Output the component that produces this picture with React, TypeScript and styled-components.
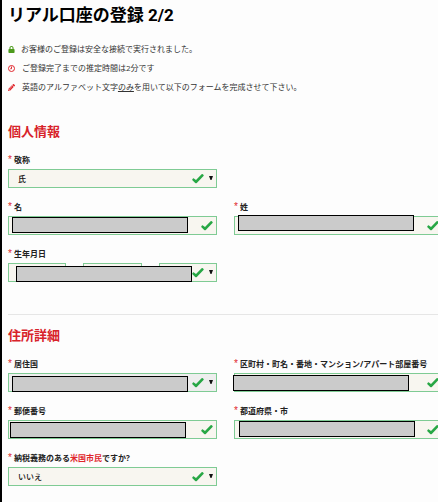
import React from "react";
import styled, { createGlobalStyle } from "styled-components";
import { FaLock, FaPencilAlt } from "react-icons/fa";

const GlobalStyle = createGlobalStyle`
  *, *::before, *::after { box-sizing: border-box; }
  html { overflow-x: hidden; }
  body {
    margin: 0;
    background: #fdfdfd;
    color: #222;
    font-family: "Open Sans", "Noto Sans CJK JP", sans-serif;
    font-size: 8px;
    line-height: 12px;
  }
`;

const Page = styled.main`
  min-height: 100vh;
  padding: 2px 0 12px 6px;
  border-left: 2px solid #000;
  overflow: hidden;
`;

const Title = styled.h1`
  margin: 0;
  font-family: Roboto, "Noto Sans CJK JP", sans-serif;
  font-size: 17px;
  font-weight: 700;
  line-height: 26px;
  color: #000;
`;

const Notes = styled.ul`
  list-style: none;
  margin: 15px 0 0;
  padding: 0;
  display: grid;
  row-gap: 7px;
`;

const Note = styled.li<{ $color: string; $gap: number }>`
  display: flex;
  align-items: center;
  gap: ${(p) => p.$gap}px;
  color: #333;
  white-space: nowrap;
  svg {
    flex: none;
    width: 7px;
    height: 7px;
    color: ${(p) => p.$color};
  }
`;

const Section = styled.section`
  margin-top: 29px;
  & + & {
    margin-top: 32px;
    padding-top: 11px;
    border-top: 1px solid #e6e6e6;
  }
`;

const Heading = styled.h2`
  margin: 0 0 14px;
  font-size: 13px;
  font-weight: 700;
  line-height: 18px;
  color: #d8232a;
`;

const Fields = styled.div`
  display: grid;
  grid-template-columns: repeat(2, minmax(0, 1fr));
  column-gap: 17px;
  row-gap: 13px;
  margin-right: -5px;
`;

const Field = styled.div<{ $first?: boolean }>`
  grid-column: ${(p) => (p.$first ? "1" : "auto")};
  min-width: 0;
`;

const Label = styled.label`
  display: block;
  height: 12px;
  margin-bottom: 3px;
  font-weight: 700;
  color: #222;
  white-space: nowrap;
  &::before {
    content: "*";
    display: inline-block;
    width: 6px;
    font-family: "Liberation Sans", sans-serif;
    font-size: 10px;
    line-height: 10px;
    font-weight: 400;
    color: #e0262c;
  }
`;

const UsLink = styled.a`
  color: #e0262c;
  text-decoration: none;
`;

const Control = styled.div`
  position: relative;
  display: flex;
  gap: 17px;
`;

const controlLook = `
  display: block;
  flex: 1 1 0;
  min-width: 0;
  width: 100%;
  height: 19px;
  margin: 0;
  padding: 0 32px 0 9px;
  border: 1px solid #7fcb94;
  border-radius: 0;
  outline: none;
  appearance: none;
  font: inherit;
  font-weight: 500;
  color: #111;
`;

const Input = styled.input`
  ${controlLook}
  background: #f8f6f0;
`;

const Select = styled.select<{ $muted?: boolean }>`
  ${controlLook}
  background: ${(p) => (p.$muted ? "#eeeeee" : "#f8f6f0")};
`;

const Marks = styled.span`
  position: absolute;
  top: 0;
  bottom: 0;
  right: 4px;
  display: flex;
  align-items: center;
  gap: 5px;
  pointer-events: none;
  color: #28a745;
`;

const Mask = styled.span<{ $left: number; $top: number }>`
  position: absolute;
  left: ${(p) => p.$left}px;
  top: ${(p) => p.$top}px;
  width: 176px;
  height: 16px;
  border: 1px solid #000;
  background: #cbcbcb;
`;

function ClockIcon() {
  return (
    <svg viewBox="0 0 14 14" fill="none" stroke="currentColor" strokeWidth="2">
      <circle cx="7" cy="7" r="6" />
      <path d="M7 3v4.5H4.5" />
    </svg>
  );
}

function CheckIcon() {
  return (
    <svg width="12" height="11" viewBox="0 0 12 11">
      <path
        d="M1.6 5.2 4 7 9.6 1.2Q10.2.6 10.8 1.2L11.6 2Q12 2.5 11.5 3L4.8 10Q4 10.7 3.2 10L.4 7.2Q0 6.7.4 6.2L1 5.5Q1.3 5.1 1.6 5.2Z"
        fill="currentColor"
      />
    </svg>
  );
}

function StatusMarks({ caret }: { caret?: boolean }) {
  return (
    <Marks aria-hidden="true">
      <CheckIcon />
      {caret && (
        <svg width="4" height="5" viewBox="0 0 4 5">
          <path d="M0 0h4L2.5 4h-1z" fill="#111" />
        </svg>
      )}
    </Marks>
  );
}

type Offset = [left: number, top: number];

function TextField({ id, label, mask, first }: { id: string; label: string; mask: Offset; first?: boolean }) {
  return (
    <Field $first={first}>
      <Label htmlFor={id}>{label}</Label>
      <Control>
        <Input id={id} type="text" />
        <Mask $left={mask[0]} $top={mask[1]} />
        <StatusMarks />
      </Control>
    </Field>
  );
}

function SelectField({
  id,
  label,
  option,
  mask,
  muted,
}: {
  id: string;
  label: React.ReactNode;
  option?: string;
  mask?: Offset;
  muted?: boolean;
}) {
  return (
    <Field $first>
      <Label htmlFor={id}>{label}</Label>
      <Control>
        <Select id={id} $muted={muted}>
          <option>{option}</option>
        </Select>
        {mask && <Mask $left={mask[0]} $top={mask[1]} />}
        <StatusMarks caret />
      </Control>
    </Field>
  );
}

export default function App() {
  return (
    <>
      <GlobalStyle />
      <Page lang="ja">
        <Title>リアル口座の登録 2/2</Title>
        <Notes>
          <Note $color="#4c9a1c" $gap={6}>
            <FaLock />
            お客様のご登録は安全な接続で実行されました。
          </Note>
          <Note $color="#e0262c" $gap={7}>
            <ClockIcon />
            ご登録完了までの推定時間は2分です
          </Note>
          <Note $color="#e0262c" $gap={7}>
            <FaPencilAlt />
            <span>
              英語のアルファベット文字<u>のみ</u>を用いて以下のフォームを完成させて下さい。
            </span>
          </Note>
        </Notes>

        <Section>
          <Heading>個人情報</Heading>
          <Fields>
            <SelectField id="salutation" label="敬称" option="氏" />
            <TextField id="given-name" label="名" mask={[4, 1]} first />
            <TextField id="family-name" label="姓" mask={[4, -1]} />
            <Field $first>
              <Label htmlFor="birth-day">生年月日</Label>
              <Control>
                <Select id="birth-day" />
                <Select aria-label="月" />
                <Select aria-label="年" />
                <Mask $left={8} $top={3} />
                <StatusMarks caret />
              </Control>
            </Field>
          </Fields>
        </Section>

        <Section>
          <Heading>住所詳細</Heading>
          <Fields>
            <SelectField id="country" label="居住国" mask={[4, 3]} muted />
            <TextField id="street" label="区町村・町名・番地・マンション/アパート部屋番号" mask={[-1, 2]} />
            <TextField id="postcode" label="郵便番号" mask={[2, 2]} first />
            <TextField id="city" label="都道府県・市" mask={[5, 1]} />
            <SelectField
              id="us-tax"
              label={
                <>
                  納税義務のある<UsLink href="#us-citizen">米国市民</UsLink>ですか?
                </>
              }
              option="いいえ"
            />
          </Fields>
        </Section>
      </Page>
    </>
  );
}
